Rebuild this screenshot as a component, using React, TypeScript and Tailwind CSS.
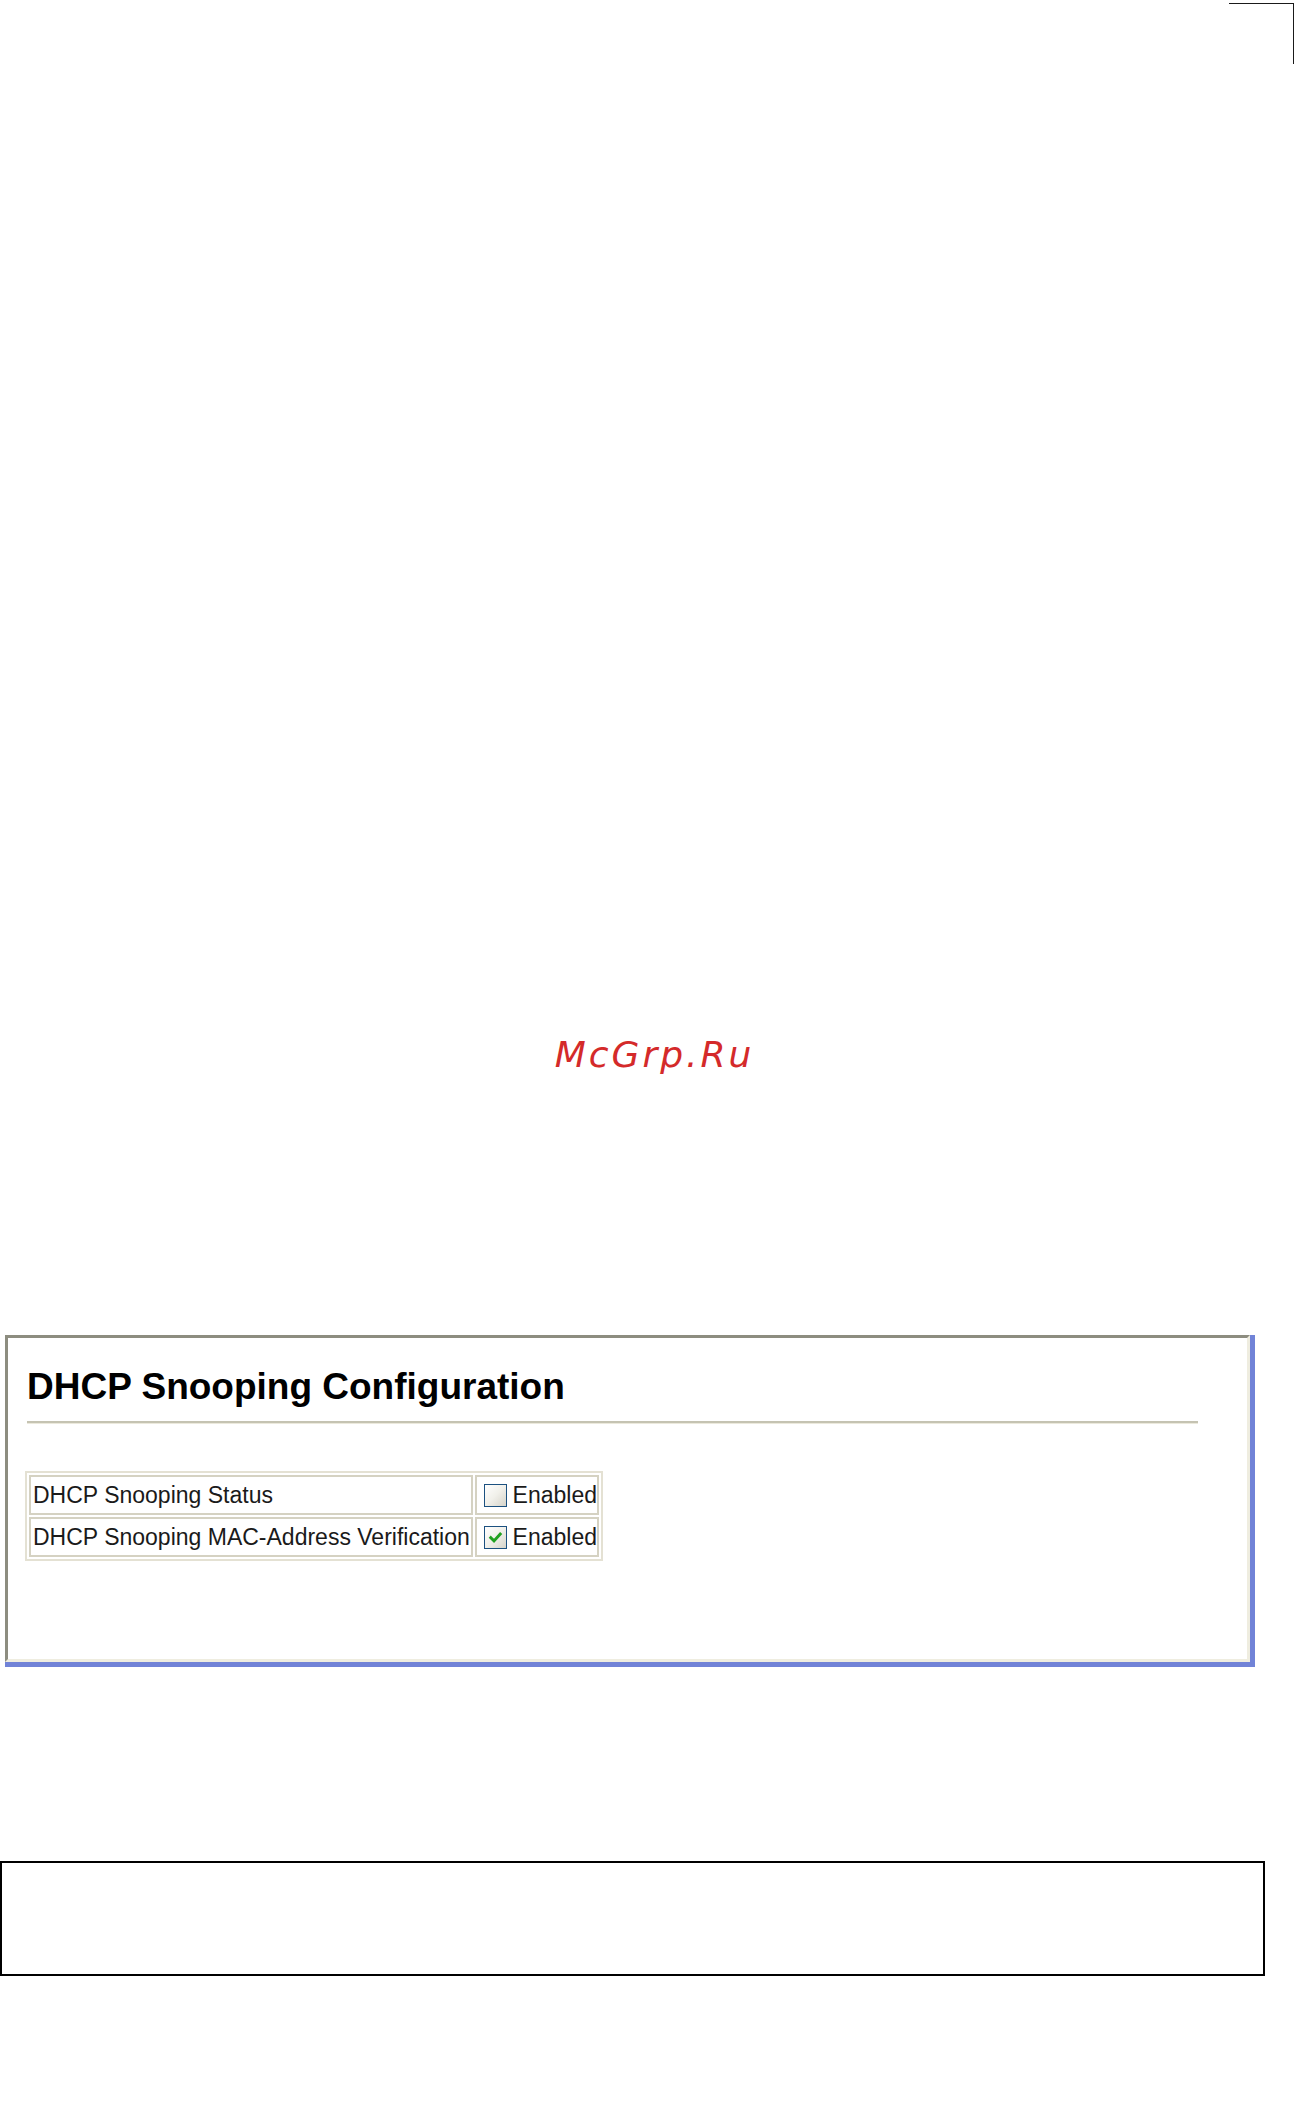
import React from 'react';

// XP-style checkbox used in the settings table
const Checkbox: React.FC<{ checked?: boolean }> = ({ checked }) => (
  <span className="inline-flex h-[23px] w-[23px] shrink-0 items-center justify-center border border-[#1c5180] bg-linear-to-br from-white via-[#f1f0ea] to-[#d6d4ca]">
    {checked && (
      <svg width="17" height="17" viewBox="0 0 16 16">
        <path d="M3.6 8.2 L6.6 11.2 L12.4 4.8" fill="none" stroke="#21a121" strokeWidth="2.8" strokeLinecap="square" />
      </svg>
    )}
  </span>
);

const rows = [
  { label: 'DHCP Snooping Status', checked: false },
  { label: 'DHCP Snooping MAC-Address Verification', checked: true },
];

const App: React.FC = () => {
  return (
    <div className="flex min-h-[2107px] w-full flex-col bg-white font-['Liberation_Sans',Arial,sans-serif] text-[#111]">
      {/* crop mark, top right */}
      <div className="flex justify-end pt-[3px] pr-[3px]">
        <div className="h-[61px] w-[65px] border-t border-r border-[#1a1a1a]" />
      </div>

      {/* watermark */}
      <div className="mt-[964px] pl-[12px] text-center">
        <span className="font-['DejaVu_Sans',sans-serif] text-[36px] italic tracking-[3px] text-[#d42a2a]">
          McGrp.Ru
        </span>
      </div>

      {/* configuration panel */}
      <div className="mt-[253px] ml-[5px] w-[1250px] border-r-[5px] border-b-[5px] border-[#7183d7]">
        <div className="flex h-[327px] flex-col border-[3px] border-t-[#8d8d80] border-l-[#8d8d80] border-r-[#efede0] border-b-[#efede0]">
          <h1 className="mt-[30px] ml-[19px] text-[37px] leading-none font-bold text-black">
            DHCP Snooping Configuration
          </h1>
          <div className="mt-[16px] ml-[19px] w-[1171px] border-t-2 border-b border-t-[#c5c3b2] border-b-[#ebe9dc]" />

          <table className="mt-[47px] ml-[17px] w-[578px] border-separate border-spacing-[2px] border-2 border-[#e4e1d3] text-[23px] text-[#1a1a1a]">
            <tbody>
              {rows.map((row) => (
                <tr key={row.label}>
                  <td className="h-[40px] w-[449px] border-2 border-[#d5d2c2] pl-[2px] whitespace-nowrap">
                    {row.label}
                  </td>
                  <td className="h-[40px] border-2 border-[#d5d2c2] pl-[7px] whitespace-nowrap">
                    <span className="flex items-center gap-[6px]">
                      <Checkbox checked={row.checked} />
                      Enabled
                    </span>
                  </td>
                </tr>
              ))}
            </tbody>
          </table>
        </div>
      </div>

      {/* empty note box */}
      <div className="mt-[194px] h-[115px] w-[1265px] border-2 border-black" />
    </div>
  );
};

export default App;
